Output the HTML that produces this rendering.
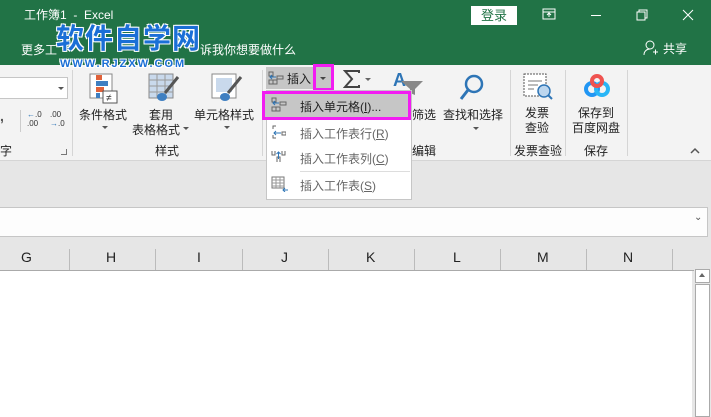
<!DOCTYPE html><html><head><meta charset="utf-8"><style>
*{margin:0;padding:0;box-sizing:border-box}
body{width:711px;height:417px;overflow:hidden;background:#fff;font-family:"Liberation Sans","Noto Sans CJK SC",sans-serif;position:relative;font-size:12px;color:#222}
.a{position:absolute}
.t{white-space:nowrap}
</style></head><body>
<div class="a" style="left:0;top:0;width:711px;height:65px;background:#217346"></div>
<div class="a t" style="left:24px;top:6px;color:#fff;font-size:12px">工作簿1 &nbsp;- &nbsp;Excel</div>
<div class="a t" style="left:21px;top:41px;color:#fff;font-size:12px">更多工</div>
<div class="a t" style="left:200px;top:41px;color:#fff;font-size:12px">诉我你想要做什么</div>

<div class="a" style="left:0;top:65px;width:711px;height:96px;background:#f3f3f3;border-bottom:1px solid #d5d5d5"></div>
<div class="a t" style="left:56px;top:22px;color:#1a6fd6;font-size:28px;line-height:34px;font-weight:bold;letter-spacing:1px;text-shadow:1px 1px 0 #fff,-1px -1px 0 #fff,1px -1px 0 #fff,-1px 1px 0 #fff">软件自学网</div>
<div class="a t" style="left:60px;top:58px;color:#1a6fd6;font-size:11px;line-height:12px;font-weight:bold;letter-spacing:2px;text-shadow:1px 1px 0 #fff,-1px -1px 0 #fff,1px -1px 0 #fff,-1px 1px 0 #fff">WWW.RJZXW.COM</div>
<div class="a t" style="left:471px;top:6px;width:46px;height:19px;background:#fff;color:#217346;text-align:center;font-size:13px;line-height:19px">登录</div>
<svg class="a" style="left:542px;top:8px" width="14" height="12"><rect x="1" y="1" width="12" height="10" fill="none" stroke="#fff"/><line x1="1" y1="4" x2="13" y2="4" stroke="#fff"/><path d="M7 9V5M5 7l2-2 2 2" stroke="#fff" fill="none"/></svg>
<div class="a" style="left:591px;top:15px;width:10px;height:1px;background:#fff"></div>
<svg class="a" style="left:636px;top:9px" width="12" height="12"><rect x="1" y="3" width="8" height="8" fill="none" stroke="#fff"/><path d="M3 3V1h8v8H9" fill="none" stroke="#fff"/></svg>
<svg class="a" style="left:682px;top:9px" width="12" height="12"><path d="M1 1l10 10M11 1L1 11" stroke="#fff"/></svg>
<svg class="a" style="left:643px;top:40px" width="16" height="16"><circle cx="7" cy="5" r="4" fill="none" stroke="#fff"/><path d="M1 15c0-4 3-6 6-6M10 12h5M12.5 9.5v5" stroke="#fff" fill="none"/></svg>
<div class="a t" style="left:663px;top:40px;color:#fff;font-size:12px">共享</div>

<div class="a" style="left:-2px;top:77px;width:70px;height:22px;background:#fff;border:1px solid #c6c6c6"></div>
<div class="a" style="left:58px;top:87px;border:3px solid transparent;border-top:3px solid #555"></div>
<div class="a t" style="left:0;top:108px;font-size:14px;font-weight:bold;color:#555">,</div>
<div class="a" style="left:20px;top:110px;width:1px;height:22px;background:#ccc"></div>
<div class="a t" style="left:27px;top:110px;font-size:8px;line-height:9px;color:#333"><span style="color:#2e75b6">←</span>.0<br>.00</div>
<div class="a t" style="left:50px;top:110px;font-size:8px;line-height:9px;color:#333">.00<br><span style="color:#2e75b6">→</span>.0</div>
<div class="a t" style="left:0;top:142px;font-size:12px">字</div>
<div class="a" style="left:61px;top:149px;width:6px;height:6px;border-right:1px solid #777;border-bottom:1px solid #777"></div>
<div class="a" style="left:72px;top:70px;width:1px;height:86px;background:#d5d5d5"></div>

<svg class="a" style="left:89px;top:73px" width="32" height="32"><rect x="1" y="1" width="22" height="24" fill="#fff" stroke="#888"/><rect x="7" y="2" width="6" height="5" fill="#e0623a"/><rect x="7" y="8" width="12" height="5" fill="#3f7fc1"/><rect x="7" y="14" width="8" height="5" fill="#e0623a"/><rect x="7" y="20" width="4" height="5" fill="#3f7fc1"/><rect x="14" y="18" width="14" height="12" fill="#fff" stroke="#555"/><text x="17" y="28" font-size="10" fill="#333">≠</text></svg>
<div class="a t" style="left:79px;top:106px;font-size:12px">条件格式</div>
<div class="a" style="left:102px;top:126px;border:3px solid transparent;border-top:3px solid #555"></div>
<svg class="a" style="left:148px;top:73px" width="32" height="32"><rect x="1" y="1" width="24" height="24" fill="#c9d9ec" stroke="#888"/><path d="M1 7h24M1 13h24M1 19h24M9 1v24M17 1v24" stroke="#999"/><path d="M30 4L17 20" stroke="#555" stroke-width="3"/><ellipse cx="14" cy="24" rx="5" ry="4" fill="#3f7fc1"/></svg>
<div class="a t" style="left:149px;top:106px;font-size:12px">套用</div>
<div class="a t" style="left:132px;top:121px;font-size:12px">表格格式</div>
<div class="a" style="left:183px;top:127px;border:3px solid transparent;border-top:3px solid #555"></div>
<svg class="a" style="left:211px;top:73px" width="32" height="32"><rect x="1" y="1" width="24" height="24" fill="#fff" stroke="#888"/><rect x="5" y="5" width="16" height="14" fill="#c9d9ec"/><path d="M30 4L17 20" stroke="#555" stroke-width="3"/><ellipse cx="14" cy="24" rx="5" ry="4" fill="#3f7fc1"/></svg>
<div class="a t" style="left:194px;top:106px;font-size:12px">单元格样式</div>
<div class="a" style="left:224px;top:126px;border:3px solid transparent;border-top:3px solid #555"></div>
<div class="a t" style="left:155px;top:142px;font-size:12px">样式</div>
<div class="a" style="left:262px;top:70px;width:1px;height:86px;background:#d5d5d5"></div>

<div class="a" style="left:266px;top:67px;width:48px;height:22px;background:#c6c6c6"></div>
<svg class="a" style="left:268px;top:71px" width="16" height="14"><path d="M1 1h4v4H1zM1 9h4v4H1zM5 9h4v4H5zM9 5h6v3H9z" fill="none" stroke="#666"/><path d="M8 6H2M4 4L2 6l2 2" stroke="#2e75b6" fill="none"/></svg>
<div class="a t" style="left:287px;top:70px;font-size:12px">插入</div>
<div class="a" style="left:313px;top:64px;width:21px;height:27px;border:3px solid #f21cf2;background:#c6c6c6"></div>
<div class="a" style="left:320px;top:77px;border:3px solid transparent;border-top:3px solid #444"></div>
<svg class="a" style="left:343px;top:70px" width="18" height="18"><path d="M16 3V1H2l7 8-7 8h14v-2" fill="none" stroke="#444" stroke-width="2"/></svg>
<div class="a" style="left:365px;top:78px;border:3px solid transparent;border-top:3px solid #666"></div>
<div class="a t" style="left:393px;top:70px;font-size:18px;color:#2e75b6;font-weight:bold">A</div>
<svg class="a" style="left:400px;top:80px" width="24" height="16"><path d="M1 1h22l-8 8v6l-5-2V9z" fill="#888"/></svg>
<svg class="a" style="left:458px;top:73px" width="28" height="30"><circle cx="16" cy="11" r="8" fill="none" stroke="#2e75b6" stroke-width="2.5"/><path d="M10 17L3 26" stroke="#2e75b6" stroke-width="3"/></svg>
<div class="a t" style="left:412px;top:106px;font-size:12px">筛选</div>
<div class="a t" style="left:443px;top:106px;font-size:12px">查找和选择</div>
<div class="a" style="left:473px;top:127px;border:3px solid transparent;border-top:3px solid #555"></div>
<div class="a t" style="left:412px;top:142px;font-size:12px">编辑</div>
<div class="a" style="left:510px;top:70px;width:1px;height:86px;background:#d5d5d5"></div>
<svg class="a" style="left:523px;top:73px" width="32" height="30"><rect x="1" y="1" width="22" height="22" fill="#fff" stroke="#555" stroke-dasharray="2 1"/><path d="M5 8h14M5 12h10M5 16h6" stroke="#777"/><circle cx="21" cy="18" r="6" fill="#bcd6ee" stroke="#2e75b6" stroke-width="1.5"/><path d="M25 22l4 4" stroke="#2e75b6" stroke-width="2"/></svg>
<div class="a t" style="left:525px;top:106px;font-size:12px;line-height:15px;text-align:center">发票<br>查验</div>
<div class="a t" style="left:514px;top:142px;font-size:12px">发票查验</div>
<div class="a" style="left:565px;top:70px;width:1px;height:86px;background:#d5d5d5"></div>
<svg class="a" style="left:583px;top:74px" width="28" height="24"><circle cx="9" cy="15" r="6" fill="none" stroke="#2196f3" stroke-width="4"/><circle cx="19" cy="15" r="6" fill="none" stroke="#29b6f6" stroke-width="4"/><circle cx="14" cy="7" r="5" fill="none" stroke="#ef5350" stroke-width="4"/></svg>
<div class="a t" style="left:572px;top:106px;font-size:12px;line-height:15px;text-align:center">保存到<br>百度网盘</div>
<div class="a t" style="left:584px;top:142px;font-size:12px">保存</div>
<div class="a" style="left:627px;top:70px;width:1px;height:86px;background:#d5d5d5"></div>
<svg class="a" style="left:690px;top:147px" width="10" height="7"><path d="M1 6l4-4 4 4" fill="none" stroke="#555" stroke-width="1.5"/></svg>

<div class="a" style="left:0;top:161px;width:711px;height:256px;background:#e6e6e6"></div>
<div class="a" style="left:-1px;top:207px;width:709px;height:30px;background:#fdfdfd;border:1px solid #c6c6c6"></div>
<div class="a t" style="left:694px;top:212px;font-size:10px;color:#555">⌄</div>

<div class="a" style="left:0;top:245px;width:711px;height:26px;background:#e6e6e6;border-bottom:1px solid #aaa"></div>
<div class="a" style="left:0;top:270px;width:692px;height:147px;background:#fff;border-top:1px solid #aaa"></div>
<div class="a" style="left:694px;top:268px;width:17px;height:149px;background:#e6e6e6"></div>
<div class="a" style="left:695px;top:269px;width:15px;height:14px;background:#fff;border:1px solid #aaa"></div>
<div class="a" style="left:699px;top:273px;border:3px solid transparent;border-bottom:4px solid #666;border-top:0"></div>
<div class="a" style="left:695px;top:284px;width:15px;height:133px;background:#fff;border:1px solid #aaa"></div>

<div class="a" style="left:266px;top:90px;width:146px;height:110px;background:#fff;border:1px solid #c6c6c6"></div>
<div class="a" style="left:262px;top:91px;width:149px;height:29px;border:3px solid #f21cf2;background:#c6c6c6"></div>
<svg class="a" style="left:271px;top:97px" width="16" height="16"><path d="M1 1h4v4H1zM1 10h4v4H1zM5 10h4v4H5zM9 5h6v3H9z" fill="none" stroke="#666"/><path d="M8 6H2M4 4L2 6l2 2" stroke="#2e75b6" fill="none"/></svg>
<div class="a t" style="left:300px;top:98px;font-size:12px">插入单元格(<u>I</u>)...</div>
<svg class="a" style="left:272px;top:125px" width="14" height="16"><path d="M4 1h-3v3M4 13h-3v-3M10 7h4v3h-4z" stroke="#666" fill="none"/><path d="M9 8H2M4 6L2 8l2 2" stroke="#2e75b6" fill="none"/></svg>
<div class="a t" style="left:300px;top:125px;font-size:12px;color:#666">插入工作表行(<u>R</u>)</div>
<svg class="a" style="left:271px;top:150px" width="16" height="14"><path d="M1 1v4h3V1M11 1v4h3V1M6 12V7h3v5" stroke="#666" fill="none"/><path d="M7.5 9V2M5.5 4l2-2 2 2" stroke="#2e75b6" fill="none"/></svg>
<div class="a t" style="left:300px;top:150px;font-size:12px;color:#666">插入工作表列(<u>C</u>)</div>
<div class="a" style="left:300px;top:171px;width:110px;height:1px;background:#ddd"></div>
<svg class="a" style="left:271px;top:176px" width="18" height="16"><rect x="1" y="1" width="12" height="11" fill="none" stroke="#777"/><path d="M1 4h12M1 7h12M1 10h12M5 1v11M9 1v11" stroke="#999"/><path d="M17 14h-5M14 12l-2 2 2 2" stroke="#2e75b6" fill="none"/></svg>
<div class="a t" style="left:300px;top:177px;font-size:12px;color:#666">插入工作表(<u>S</u>)</div>

<div class="a t" style="left:21px;top:249px;font-size:14px">G</div>
<div class="a" style="left:69px;top:249px;width:1px;height:21px;background:#bbb"></div>
<div class="a t" style="left:106px;top:249px;font-size:14px">H</div>
<div class="a" style="left:155px;top:249px;width:1px;height:21px;background:#bbb"></div>
<div class="a t" style="left:197px;top:249px;font-size:14px">I</div>
<div class="a" style="left:242px;top:249px;width:1px;height:21px;background:#bbb"></div>
<div class="a t" style="left:281px;top:249px;font-size:14px">J</div>
<div class="a" style="left:328px;top:249px;width:1px;height:21px;background:#bbb"></div>
<div class="a t" style="left:366px;top:249px;font-size:14px">K</div>
<div class="a" style="left:414px;top:249px;width:1px;height:21px;background:#bbb"></div>
<div class="a t" style="left:453px;top:249px;font-size:14px">L</div>
<div class="a" style="left:500px;top:249px;width:1px;height:21px;background:#bbb"></div>
<div class="a t" style="left:537px;top:249px;font-size:14px">M</div>
<div class="a" style="left:586px;top:249px;width:1px;height:21px;background:#bbb"></div>
<div class="a t" style="left:623px;top:249px;font-size:14px">N</div>
<div class="a" style="left:672px;top:249px;width:1px;height:21px;background:#bbb"></div>
</body></html>
